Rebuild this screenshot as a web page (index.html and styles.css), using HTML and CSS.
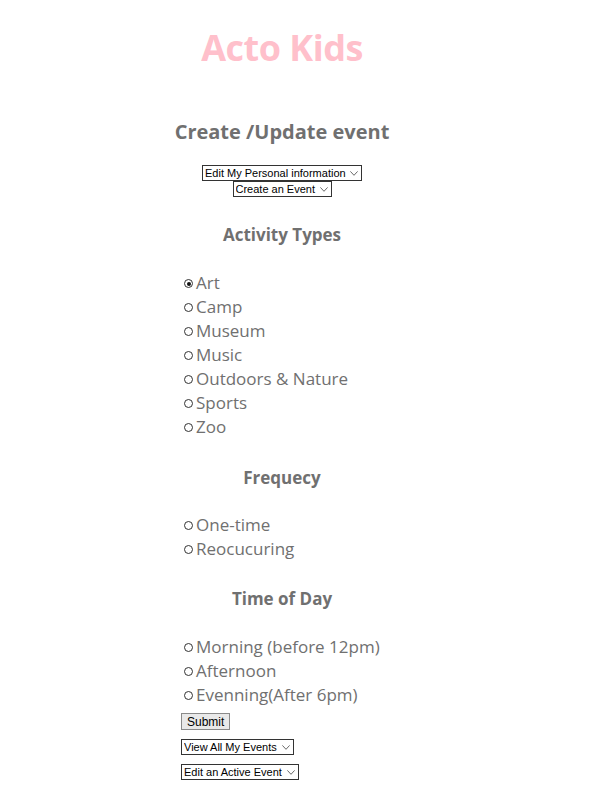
FILE: index.html
```html
<!DOCTYPE html>
<html>
<head>
<meta charset="utf-8">
<link rel="stylesheet" href="styles.css">
</head>
<body>
<div class="page">
  <h1 class="brand">Acto Kids</h1>
  <h2 class="title">Create /Update event</h2>
  <div class="menus">
    <span class="sel"><select><option>Edit My Personal information</option></select><svg class="chev" viewBox="0 0 8 5"><path d="M0.4 0.4 L4 4.3 L7.6 0.4" fill="none" stroke="#444" stroke-width="0.8"/></svg></span>
    <span class="sel"><select><option>Create an Event</option></select><svg class="chev" viewBox="0 0 8 5"><path d="M0.4 0.4 L4 4.3 L7.6 0.4" fill="none" stroke="#444" stroke-width="0.8"/></svg></span>
  </div>

  <h3 class="section">Activity Types</h3>
  <ul class="options">
    <li><label><input type="radio" name="type" checked>Art</label></li>
    <li><label><input type="radio" name="type">Camp</label></li>
    <li><label><input type="radio" name="type">Museum</label></li>
    <li><label><input type="radio" name="type">Music</label></li>
    <li><label><input type="radio" name="type">Outdoors &amp; Nature</label></li>
    <li><label><input type="radio" name="type">Sports</label></li>
    <li><label><input type="radio" name="type">Zoo</label></li>
  </ul>

  <h3 class="section wide-gap">Frequecy</h3>
  <ul class="options tight">
    <li><label><input type="radio" name="freq">One-time</label></li>
    <li><label><input type="radio" name="freq">Reocucuring</label></li>
  </ul>

  <h3 class="section">Time of Day</h3>
  <ul class="options">
    <li><label><input type="radio" name="time">Morning (before 12pm)</label></li>
    <li><label><input type="radio" name="time">Afternoon</label></li>
    <li><label><input type="radio" name="time">Evenning(After 6pm)</label></li>
  </ul>

  <div class="actions">
    <button class="submit">Submit</button>
    <span class="sel"><select><option>View All My Events</option></select><svg class="chev" viewBox="0 0 8 5"><path d="M0.4 0.4 L4 4.3 L7.6 0.4" fill="none" stroke="#444" stroke-width="0.8"/></svg></span>
    <span class="sel"><select><option>Edit an Active Event</option></select><svg class="chev" viewBox="0 0 8 5"><path d="M0.4 0.4 L4 4.3 L7.6 0.4" fill="none" stroke="#444" stroke-width="0.8"/></svg></span>
  </div>
</div>
</body>
</html>
```

FILE: styles.css
```css
html, body {
  margin: 0;
  padding: 0;
  background: #ffffff;
}
body {
  font-family: "Open Sans", "Noto Sans", sans-serif;
  color: #707070;
}
.page {
  width: 300px;
  margin-left: 132px;
  display: flex;
  flex-direction: column;
}
.brand {
  margin: 24px 0 0;
  text-align: center;
  font-size: 36px;
  line-height: 48px;
  font-weight: 700;
  color: #ffc0cb;
  letter-spacing: -0.5px;
}
.title {
  margin: 46px 0 0;
  text-align: center;
  font-size: 20px;
  line-height: 28px;
  font-weight: 700;
  color: #707070;
}
.menus {
  margin-top: 19px;
  display: flex;
  flex-direction: column;
  align-items: center;
}
.sel {
  display: inline-flex;
  align-items: center;
  border: 1px solid #333;
  height: 14px;
  padding: 0 3px 0 2px;
  background: #fff;
  box-sizing: content-box;
}
.sel select {
  appearance: none;
  -webkit-appearance: none;
  border: 0;
  padding: 0;
  margin: 0;
  background: transparent;
  font-family: "Liberation Sans", Arial, sans-serif;
  font-size: 11px;
  line-height: 14px;
  color: #000;
  outline: none;
}
.chev {
  width: 8px;
  height: 5px;
  margin-left: 4px;
}
.section {
  margin: 26px 0 0;
  text-align: center;
  font-size: 17px;
  line-height: 24px;
  font-weight: 700;
  color: #707070;
}
.section.wide-gap {
  margin-top: 27px;
}
.options {
  list-style: none;
  margin: 24px 0 0;
  padding: 0 0 0 50px;
}
.options.tight {
  margin-top: 23px;
}
.options li {
  height: 24px;
  display: flex;
  align-items: center;
}
.options label {
  display: flex;
  align-items: center;
  font-size: 17px;
  line-height: 24px;
  color: #707070;
}
.options input {
  appearance: none;
  -webkit-appearance: none;
  width: 9px;
  height: 9px;
  margin: 1px 3px 0 2px;
  border: 1.3px solid #333;
  border-radius: 50%;
  box-sizing: border-box;
  display: inline-grid;
  place-content: center;
}
.options input:checked::before {
  content: "";
  width: 4px;
  height: 4px;
  border-radius: 50%;
  background: #111;
}
.actions {
  margin-top: 6px;
  display: flex;
  flex-direction: column;
  align-items: flex-start;
  gap: 9px;
}
.submit {
  font-family: "Liberation Sans", Arial, sans-serif;
  font-size: 12px;
  line-height: 14px;
  height: 17px;
  padding: 0 5px;
  margin-left: 49px;
  border: 1px solid #8a8a8a;
  background: #e9e9e9;
  color: #000;
  border-radius: 0;
}
.actions .sel {
  margin-left: 49px;
}
```
